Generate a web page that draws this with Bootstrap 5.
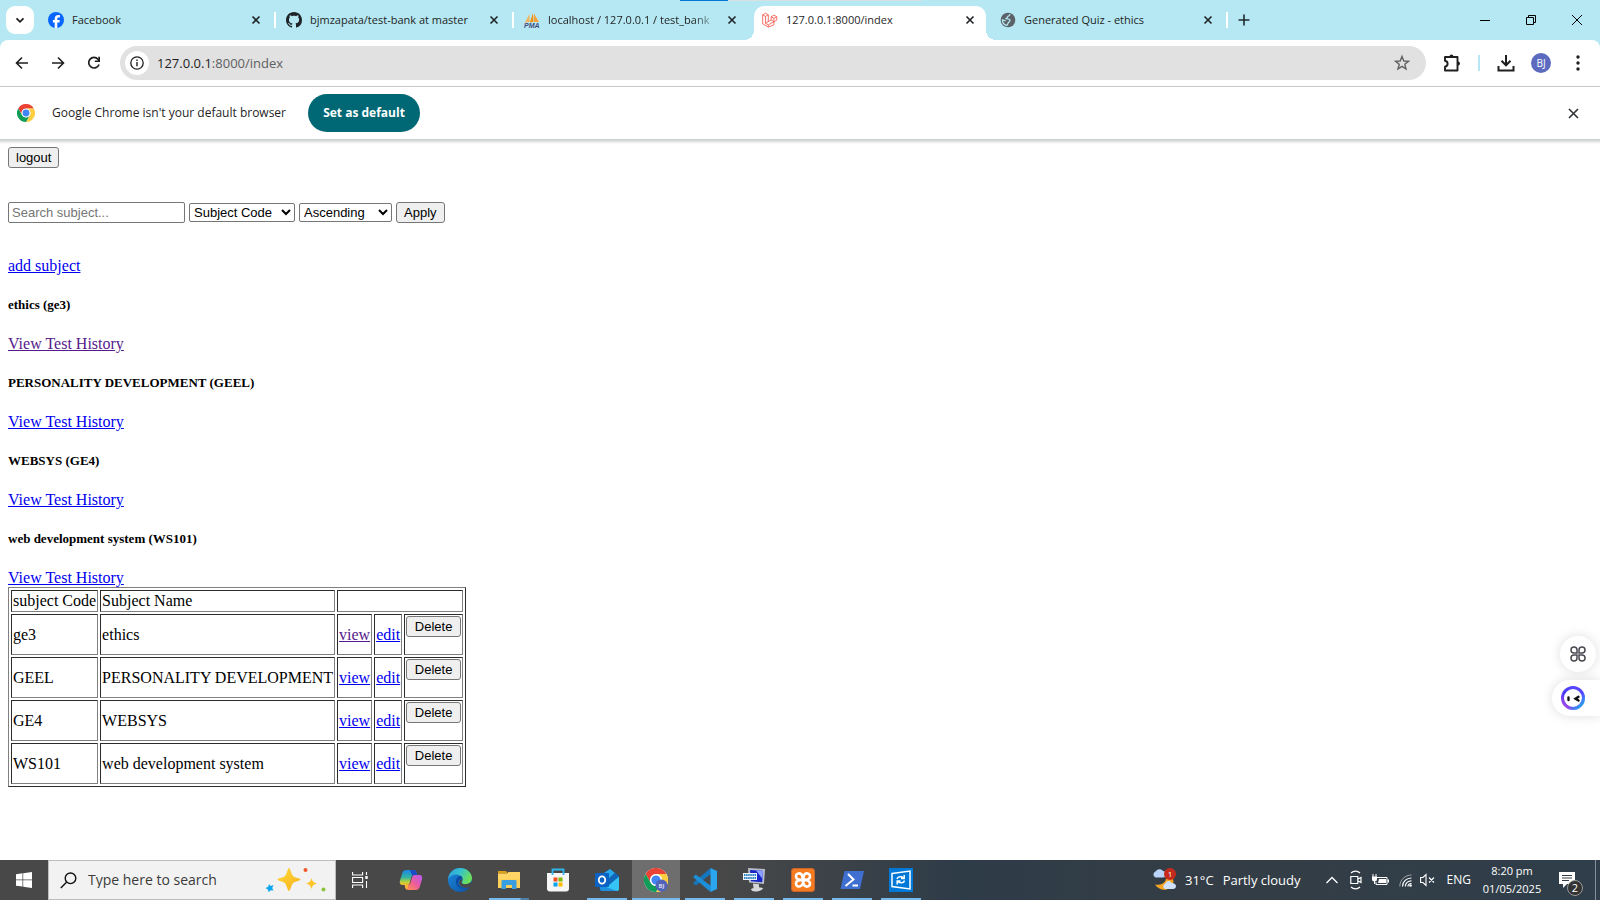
<!DOCTYPE html>
<html lang="en">
<head>
<meta charset="utf-8">
<meta name="viewport" content="width=device-width, initial-scale=1">
<title>127.0.0.1:8000/index</title>
<link href="https://cdn.jsdelivr.net/npm/bootstrap@5.3.0/dist/css/bootstrap.min.css" rel="stylesheet">
<style>
body{font-family:"Open Sans","Noto Sans",sans-serif;font-size:12px;line-height:16px;color:#1f1f1f;background:#fff;overflow:hidden}
button{color:inherit}
svg{display:block;flex:none}
.plain{background:none;border:0;padding:0;display:flex;align-items:center;justify-content:center;flex:none}
.strip{background:#b5e8f2;height:40px}
.tabsearch{width:28px;height:28px;border-radius:9px;background:#fff;margin-left:6px;margin-right:4px}
.tab{flex:0 1 238px;min-width:0;height:24px;padding:0 15px 0 10px;gap:8px;position:relative;font-size:11px}
.tab:not(.on):not(.nosep)::after{content:"";position:absolute;right:0;top:4px;width:2px;height:16px;background:#fff}
.tab .ttl{flex:1;min-width:0;overflow:hidden;white-space:nowrap}
.tab .fade-end{-webkit-mask-image:linear-gradient(90deg,#000 85%,transparent)}
.tab.on{height:34px;align-self:flex-end;padding-bottom:6px;z-index:1}
.tab.on::before{content:"";position:absolute;inset:0 4px 0 2px;background:#fff;border-radius:10px 10px 0 0;z-index:-1}
.flare{position:absolute;bottom:0;width:10px;height:10px}
.flare.l{left:-8px;background:radial-gradient(circle at 0 0,transparent 10px,#fff 10px)}
.flare.r{right:-6px;background:radial-gradient(circle at 100% 0,transparent 10px,#fff 10px)}
.winbtn{width:46px;height:40px}
.loadbar{position:absolute;top:0;left:680px;width:242px;height:1px;background:linear-gradient(90deg,#0078d7 48px,#d6dfe2 48px);z-index:3}
.toolbar-wrap{background:#b5e8f2}
.toolrow{height:47px;background:#fff;border-bottom:1px solid #c7c7c7;border-radius:8px 8px 0 0;padding:0 19px 0 4px}
.toolsep{width:2px;height:16px;background:#b5e8f2;margin:0 17px 0 16px}
.navbtn{width:36px;height:34px}
.omni{height:34px;border-radius:17px;background:#e1e1e1;margin-left:8px;padding:0 15px 0 5px;font-size:13px;min-width:0}
.siteinfo{width:24px;height:24px;border-radius:50%;background:#fff}
.omni span{color:#5f6062}
.avatar{width:20px;height:20px;border-radius:50%;background:#5c6bc0;color:#fff;font-size:10px}
.infobar{height:52px;padding:0 20px 0 17px;font-size:12px}
.notice{margin:0 22px 0 17px}
.setdef{height:38px;width:112px;border:0;border-radius:19px;background:#006874;color:#fff;font-weight:700;font-size:12px}
.pagebox{font:16px/18px "Liberation Serif",serif;color:#000;padding:8px;background:linear-gradient(#ccd2d2 0,#ccd2d2 1px,#dde0e0 2px,#fff 5px)}
.pagebox a{color:#00e}
.pagebox a.seen{color:#551a8b}
.pagebox button,.pagebox input,.pagebox select{font:13px/15px "Liberation Sans",Arial,sans-serif;color:#000;margin:0}
.pagebox button{height:21px;background:#efefef;border:1px solid #767676;border-radius:3px;padding:0 7px}
.pagebox input{width:177px;height:21px;border:1px solid #767676;border-radius:2px;padding:1px 3px}
.pagebox input::placeholder{color:#757575}
.pagebox select{height:19px;background:#fff;border:1px solid #767676;border-radius:2px;padding:0}
.sel-code{width:106px}.sel-dir{width:93px}
.filters{margin:34px 0}
.pagebox h5{font-size:13px;line-height:16px;font-weight:700;margin:22px 0}
.subjects{border-collapse:separate;border-spacing:2px;border:1px outset gray}
.subjects td,.subjects th{border:1px inset gray;padding:1px;font-weight:400;vertical-align:middle;white-space:nowrap}
.subjects form{margin-bottom:16px}
.subjects button{width:55px;display:block}
.sidekick{position:absolute;right:0;top:636px;z-index:5}
.sk-round{width:36px;height:36px;border-radius:50%;background:#fff;box-shadow:0 0 12px #0002;margin-right:4px}
.sk-pill{width:48px;height:36px;border-radius:18px 0 0 18px;background:#fff;box-shadow:0 0 12px #0002;padding-right:6px}
.taskbar{height:40px;background:linear-gradient(90deg,#484848 0,#484848 45%,#2e3c48 60%,#343d45 75%,#2f3e4a 100%);color:#fff}
.startbtn{width:48px;height:40px}
.tsearch{width:288px;height:40px;background:#f2f2f2;border:1px solid #bdbdbd;padding:0 9px 0 11px}
.tsearch input{border:0;background:none;font-size:14px;width:140px;padding:0;margin-left:11px;flex:1;min-width:0}
.tsearch input::placeholder{color:#3b3b3b;opacity:1}
.app{width:48px;height:40px;position:relative;margin-right:1px}
.taskview{margin-right:3px}
.app.run::after{content:"";position:absolute;left:4px;right:4px;bottom:0;height:2px;background:#76b9ed}
.app.multi::after{background:linear-gradient(90deg,#76b9ed 31px,#4f7ea6 32px)}
.app.cur{background:#6e6e6e}
.app.cur::after{left:0;right:0}
.tray{gap:8px}
.weather{font-size:13px;gap:9px;margin-right:17px}
.tight{margin-left:2px}
.clock{font-size:11px;line-height:18px;width:60px;margin:0 1px 0 3px}
.count{position:absolute;left:8px;top:8px;width:16px;height:16px;border-radius:50%;background:#333;border:1px solid #999;font-size:11px;line-height:14px;text-align:center}
.peek{width:1px;height:40px;background:#87919a;margin:0 4px 0 12px}
</style>
</head>
<body class="min-vh-100 d-flex flex-column position-relative">
<svg width="0" height="0" class="position-absolute" aria-hidden="true">
<defs>
<symbol id="x" viewBox="0 0 10 10"><path d="M1.500 1.500l7 7m0-7l-7 7" stroke="#202427" stroke-width="1.600"/></symbol>
<symbol id="globe" viewBox="0 0 16 16"><circle cx="8" cy="8" r="7.300" fill="#5b6166"/><path d="M10 2.200c-.3 1.500-1 2-2.300 2.300-.7 1-.3 1.700-1.500 2.200 1 .4 3.200-.2 3.800 1.300.5 1.500-1.600 2-2 3.300-.2.800-.8 1.700-1.300 2.200C3.500 12.500 2.300 10.500 2.500 7.800L5.800 9" fill="none" stroke="#b5e8f2" stroke-width="1.300"/></symbol>
<symbol id="chrome" viewBox="0 0 24 24"><circle cx="12" cy="12" r="12" fill="#fff"/><path d="M1.600 6A12 12 0 0 1 22.400 6H12a6 6 0 0 0-5.200 9z" fill="#ea4335"/><path d="M22.400 6A12 12 0 0 1 12 24l5.200-9A6 6 0 0 0 12 6z" fill="#ffcd40"/><path d="M1.600 6L6.800 15a6 6 0 0 0 10.400 0L12 24A12 12 0 0 1 1.600 6z" fill="#0f9d58"/><circle cx="12" cy="12" r="5.800" fill="#fff"/><circle cx="12" cy="12" r="4.600" fill="#4285f4"/></symbol>
</defs>
</svg>
<div class="loadbar"></div>
<header>
<div class="strip d-flex align-items-center">
<button class="plain tabsearch" aria-label="Search tabs"><svg width="12" height="12" viewBox="0 0 12 12"><path d="M2.500 4.300L6 7.800l3.500-3.500" fill="none" stroke="#1f1f1f" stroke-width="1.800"/></svg></button>
<div class="tab d-flex align-items-center">
<svg width="16" height="16" viewBox="0 0 16 16"><circle cx="8" cy="8" r="8" fill="#0866ff"/><path d="M6.700 15.900v-5.300H4.900V8.100h1.800V7c0-2.700 1.200-4 3.700-4l1.500.1v2.300h-1c-1.200 0-1.600.4-1.600 1.500v1.200h2.500l-.4 2.500H9.300v5.300z" fill="#fff"/></svg>
<span class="ttl">Facebook</span><button class="plain" aria-label="Close tab"><svg width="10" height="10"><use href="#x"/></svg></button></div>
<div class="tab d-flex align-items-center">
<svg width="16" height="16" viewBox="0 0 16 16"><path fill="#1f2328" d="M8 0C3.580 0 0 3.580 0 8c0 3.540 2.290 6.530 5.470 7.590.4.070.55-.17.55-.38 0-.19-.01-.82-.01-1.490-2.010.37-2.530-.49-2.690-.94-.09-.23-.48-.94-.82-1.130-.28-.15-.68-.52-.01-.53.63-.01 1.080.58 1.230.82.72 1.210 1.870.87 2.330.66.070-.52.28-.87.51-1.070-1.780-.2-3.640-.89-3.640-3.950 0-.87.31-1.590.82-2.150-.08-.2-.36-1.020.08-2.120 0 0 .67-.21 2.200.82.64-.18 1.320-.27 2-.27s1.360.09 2 .27c1.530-1.040 2.200-.82 2.200-.82.44 1.100.16 1.920.08 2.120.51.56.82 1.270.82 2.150 0 3.070-1.870 3.750-3.650 3.950.29.25.54.73.54 1.480 0 1.070-.01 1.930-.01 2.200 0 .21.15.46.55.38A8 8 0 0 0 16 8c0-4.420-3.580-8-8-8z"/></svg>
<span class="ttl">bjmzapata/test-bank at master</span><button class="plain" aria-label="Close tab"><svg width="10" height="10"><use href="#x"/></svg></button></div>
<div class="tab nosep d-flex align-items-center">
<svg width="16" height="16" viewBox="0 0 16 16"><path d="M1 10.500L5.500 2v8z" fill="#f2b45a"/><path d="M5.800 10.500L9 1v9z" fill="#f29111"/><path d="M9.500 10L9.800 1.500 15 10z" fill="#f5a13a"/><text x="0" y="15.500" font-family="Liberation Sans" font-size="7" font-weight="700" font-style="italic" fill="#444a80">PMA</text></svg>
<span class="ttl fade-end">localhost / 127.0.0.1 / test_bank</span><button class="plain" aria-label="Close tab"><svg width="10" height="10"><use href="#x"/></svg></button></div>
<div class="tab on d-flex align-items-center"><i class="flare l"></i><i class="flare r"></i>
<svg width="16" height="16" viewBox="0 0 17 16"><path d="M.7 2.500L3.700.8l3 1.700v7.200l3-1.700V4.500l3-1.700 3 1.700v3.600l-3 1.700v3.300L6.700 15.500l-6-3.400zM.7 2.500l3 1.700 3-1.700M3.700 4.200v7.200l3 1.800 6-3.400-3-1.800M3.700 11.400l3-1.700M6.700 13.200v2.300M9.700 4.500l3 1.700 3-1.700M12.700 6.200v3.600" fill="none" stroke="#f9594f" stroke-width=".9"/></svg>
<span class="ttl">127.0.0.1:8000/index</span><button class="plain" aria-label="Close tab"><svg width="10" height="10"><use href="#x"/></svg></button></div>
<div class="tab d-flex align-items-center"><svg width="16" height="16"><use href="#globe"/></svg>
<span class="ttl">Generated Quiz - ethics</span><button class="plain" aria-label="Close tab"><svg width="10" height="10"><use href="#x"/></svg></button></div>
<button class="plain ms-2" aria-label="New tab"><svg width="16" height="16" viewBox="0 0 16 16"><path d="M8 2.500v11M2.500 8h11" stroke="#1f2a2d" stroke-width="1.600"/></svg></button>
<div class="d-flex ms-auto">
<button class="plain winbtn" aria-label="Minimize"><svg width="10" height="10"><path d="M0 5.500h10" stroke="#000"/></svg></button>
<button class="plain winbtn" aria-label="Restore"><svg width="12" height="12"><path d="M1.500 3.500h7v7h-7zM3.500 3V1.500h7v7H9" fill="none" stroke="#000"/></svg></button>
<button class="plain winbtn" aria-label="Close"><svg width="12" height="12"><path d="M1 1l10 10M11 1L1 11" stroke="#000"/></svg></button>
</div>
</div>
<div class="toolbar-wrap"><div class="toolrow d-flex align-items-center">
<button class="plain navbtn" aria-label="Back"><svg width="14" height="14" viewBox="0 0 14 14"><path d="M13 7H2M7 1.500L1.500 7 7 12.500" fill="none" stroke="#1f1f1f" stroke-width="1.600"/></svg></button>
<button class="plain navbtn" aria-label="Forward"><svg width="14" height="14" viewBox="0 0 14 14"><path d="M1 7h11M7 1.500L12.500 7 7 12.500" fill="none" stroke="#1f1f1f" stroke-width="1.600"/></svg></button>
<button class="plain navbtn" aria-label="Reload"><svg width="14" height="14" viewBox="0 0 14 14"><path d="M12 8.500A5.300 5.300 0 1 1 11 3.200l1.200 1.500" fill="none" stroke="#1f1f1f" stroke-width="1.700"/><path d="M13 .8v5.200H7.800V4.500h3.500V.8z" fill="#1f1f1f"/></svg></button>
<div class="omni d-flex align-items-center flex-grow-1">
<button class="plain siteinfo me-2" aria-label="Site information"><svg width="14" height="14" viewBox="0 0 14 14"><circle cx="7" cy="7" r="6.200" fill="none" stroke="#1f1f1f" stroke-width="1.300"/><path d="M7 6v4.200M7 3.600v1.500" stroke="#1f1f1f" stroke-width="1.400"/></svg></button>
<div>127.0.0.1<span>:8000/index</span></div>
<button class="plain ms-auto" aria-label="Bookmark"><svg width="18" height="18" viewBox="0 0 18 18"><path d="M9 2.500l1.800 4.500 4.700.3-3.700 3 1.200 4.700L9 12.400 5 15l1.200-4.700-3.700-3 4.700-.3z" fill="none" stroke="#5f6062" stroke-width="1.400"/></svg></button>
</div>
<button class="plain ms-3" aria-label="Extensions"><svg width="20" height="20" viewBox="0 0 20 20"><path d="M3 4h12.500v13.500H3v-3.800c3.500-.6 3.500-5.300 0-5.900z" fill="none" stroke="#1f1f1f" stroke-width="1.900" stroke-linejoin="round"/><path d="M7.500 3.500a2 2 0 0 1 4 0zM16 8.500a2 2 0 0 1 0 4z" fill="#1f1f1f"/></svg></button>
<div class="toolsep"></div>
<button class="plain" aria-label="Downloads"><svg width="18" height="18" viewBox="0 0 18 18"><path d="M9 1v10M4.500 6.800L9 11.300l4.500-4.500M1.500 12v4.500h15V12" fill="none" stroke="#1f1f1f" stroke-width="2"/></svg></button>
<button class="plain avatar ms-3" aria-label="Profile BJ">BJ</button>
<button class="plain ms-4" aria-label="Menu"><svg width="6" height="18" viewBox="0 0 6 18" fill="#1f1f1f"><circle cx="3" cy="3" r="1.700"/><circle cx="3" cy="9" r="1.700"/><circle cx="3" cy="15" r="1.700"/></svg></button>
</div></div>
<div class="infobar d-flex align-items-center">
<svg width="18" height="18"><use href="#chrome"/></svg>
<span class="notice">Google Chrome isn't your default browser</span>
<button class="setdef">Set as default</button>
<button class="plain ms-auto" aria-label="Dismiss"><svg width="13" height="13" viewBox="0 0 13 13"><path d="M2 2l9 9m0-9l-9 9" stroke="#303336" stroke-width="1.600"/></svg></button>
</div>
</header>
<main class="pagebox flex-grow-1">
<button class="d-block">logout</button>
<form class="filters d-flex align-items-center gap-1" onsubmit="return false">
<input type="text" placeholder="Search subject..." aria-label="Search subject">
<select class="sel-code" aria-label="Sort by"><option>Subject Code</option><option>Subject Name</option></select>
<select class="sel-dir" aria-label="Order"><option>Ascending</option><option>Descending</option></select>
<button>Apply</button>
</form>
<div><a href="#">add subject</a></div>
<h5>ethics (ge3)</h5>
<div><a class="seen" href="#">View Test History</a></div>
<h5>PERSONALITY DEVELOPMENT (GEEL)</h5>
<div><a href="#">View Test History</a></div>
<h5>WEBSYS (GE4)</h5>
<div><a href="#">View Test History</a></div>
<h5>web development system (WS101)</h5>
<div><a href="#">View Test History</a></div>
<table class="subjects">
<tr><th>subject Code</th><th>Subject Name</th><th colspan="3"></th></tr>
<tr><td>ge3</td><td>ethics</td><td><a class="seen" href="#">view</a></td><td><a href="#">edit</a></td><td><form onsubmit="return false"><button>Delete</button></form></td></tr>
<tr><td>GEEL</td><td>PERSONALITY DEVELOPMENT</td><td><a href="#">view</a></td><td><a href="#">edit</a></td><td><form onsubmit="return false"><button>Delete</button></form></td></tr>
<tr><td>GE4</td><td>WEBSYS</td><td><a href="#">view</a></td><td><a href="#">edit</a></td><td><form onsubmit="return false"><button>Delete</button></form></td></tr>
<tr><td>WS101</td><td>web development system</td><td><a href="#">view</a></td><td><a href="#">edit</a></td><td><form onsubmit="return false"><button>Delete</button></form></td></tr>
</table>
</main>
<aside class="sidekick d-flex flex-column align-items-end gap-2">
<button class="plain sk-round" aria-label="Apps"><svg width="16" height="16" viewBox="0 0 16 16" fill="none" stroke="#4a4850" stroke-width="1.500"><path d="M7 7H4a3 3 0 1 1 3-3zM9 7V4a3 3 0 1 1 3 3zM7 9v3a3 3 0 1 1-3-3zM9 9h3a3 3 0 1 1-3 3z"/></svg></button>
<button class="plain sk-pill" aria-label="Assistant"><svg width="24" height="24" viewBox="0 0 24 24"><defs><linearGradient id="ring" x1="0" y1="1" x2="1" y2="0"><stop offset="0" stop-color="#c04be8"/><stop offset=".4" stop-color="#4b3df5"/><stop offset="1" stop-color="#5a49ff"/></linearGradient><linearGradient id="ring2" x1="0" y1="0" x2="1" y2="1"><stop offset=".6" stop-color="#20c8f0" stop-opacity="0"/><stop offset="1" stop-color="#20c8f0"/></linearGradient></defs><circle cx="12" cy="12" r="10.500" fill="none" stroke="url(#ring)" stroke-width="3"/><circle cx="12" cy="12" r="10.500" fill="none" stroke="url(#ring2)" stroke-width="3"/><path d="M7.500 11.500v2.500M17.500 10.800l-3 1.900 3 1.900" fill="none" stroke="#111" stroke-width="2.400" stroke-linecap="round"/></svg></button>
</aside>
<footer class="taskbar d-flex align-items-center">
<button class="plain startbtn" aria-label="Start"><svg width="16" height="16" viewBox="0 0 16 16" fill="#fff"><path d="M0 2.200l6.500-.9v6.300H0zM7.200 1.200L16 0v7.600H7.200zM0 8.300h6.500v6.300L0 13.700zM7.200 8.300H16V16l-8.800-1.200z"/></svg></button>
<div class="tsearch d-flex align-items-center">
<svg width="17" height="17" viewBox="0 0 17 17"><circle cx="10.500" cy="6.300" r="5.300" fill="none" stroke="#111" stroke-width="1.400"/><path d="M6.500 10.200L.8 16" stroke="#111" stroke-width="1.400"/></svg>
<input type="text" placeholder="Type here to search" aria-label="Type here to search">
<svg width="61" height="26" viewBox="0 0 61 26"><defs><linearGradient id="gold" x1="0" y1="0" x2="1" y2="1"><stop offset="0" stop-color="#ffd83a"/><stop offset="1" stop-color="#f6b21c"/></linearGradient></defs><path d="M24 1c1.300 0 2.300 6.500 4.200 8.200 1.600 1.600 7.300 2 7.300 3.300s-5.800 1.900-7.300 3.500C26.200 18 25.300 24 24 24s-2.300-6-4.200-8c-1.600-1.600-7.300-2-7.300-3.500s5.800-1.800 7.300-3.300C21.700 7.500 22.700 1 24 1z" fill="url(#gold)"/><path d="M46.500 11c1.200 3.700 1.700 4.200 5.300 5.500-3.600 1.300-4.100 1.800-5.300 5.500-1.200-3.700-1.700-4.200-5.300-5.500 3.600-1.300 4.100-1.800 5.300-5.500z" fill="#fcc52c"/><path d="M4 17l1.700 2 2.800-1-1.300 3 1.300 2.500-2.800-.3-2 2-.8-2.700L.5 21l2.800-1.200z" fill="#0aa6ef"/><circle cx="40.500" cy="3" r="2" fill="#f0592b"/><circle cx="58.500" cy="22.500" r="2" fill="#8bc540"/></svg>
</div>
<button class="plain app taskview" aria-label="Task view"><svg width="16" height="16" viewBox="0 0 16 16" fill="none" stroke="#fff" stroke-width="1.100"><path d="M.6 0v3h10V0M.6 16v-3h10v3M.6 5.500h10v5H.6zM14.500 0v3M14.500 9v7"/><path d="M13.300 5.500h2.400" stroke-width="3"/></svg></button>
<button class="plain app" aria-label="Copilot"><svg width="24" height="22" viewBox="0 0 24 22"><defs><linearGradient id="c1" x1="0" y1="0" x2="0" y2="1"><stop offset="0" stop-color="#1a86e8"/><stop offset=".5" stop-color="#35b5a0"/><stop offset=".8" stop-color="#b8d13b"/><stop offset="1" stop-color="#f5b92d"/></linearGradient><linearGradient id="c2" x1="1" y1="0" x2="0" y2="1"><stop offset="0" stop-color="#b45af2"/><stop offset=".5" stop-color="#ee5c9c"/><stop offset="1" stop-color="#ff9a3e"/></linearGradient></defs><path d="M7 1h7.500c2 0 2.800 1.500 3.300 3l.5 2h-3c-2 0-2.800 1-3.300 3l-1.200 4.500c-.6 2-1.800 2.500-3.800 2.500H3.500C1 16 .3 14 1 11.500L3.500 3.500C4 2 5.300 1 7 1z" fill="url(#c1)"/><path d="M17 21H9.500c-2 0-2.800-1.500-3.300-3l-.5-2h2.500c2 0 3-1 3.500-3L13 8.500C13.500 6.600 14.500 6 16.500 6h4c2.500 0 3.200 2 2.500 4.500l-2.500 8c-.5 1.500-1.800 2.500-3.500 2.500z" fill="url(#c2)"/><path d="M14.500 1c2 0 2.800 1.500 3.300 3l.5 2h-3c-1 0-1.700.2-2.200.7L11 1z" fill="#1c4bc4"/><path d="M11.200 10.800L9 18c-.3 1.200-.8 2.200-1.600 2.500C6 19.500 5.900 17 5.700 16h2.500c2 0 2.500-2 3-5.200z" fill="#ffb03a"/></svg></button>
<button class="plain app" aria-label="Edge"><svg width="24" height="24" viewBox="0 0 24 24"><defs><linearGradient id="e1" x1="0" y1="0" x2="1" y2=".4"><stop offset="0" stop-color="#2f9fe0"/><stop offset=".5" stop-color="#35c1d0"/><stop offset="1" stop-color="#6be05a"/></linearGradient><linearGradient id="e2" x1="0" y1="0" x2="1" y2="1"><stop offset="0" stop-color="#1b8be0"/><stop offset="1" stop-color="#0e4f9e"/></linearGradient></defs><circle cx="12" cy="12" r="12" fill="url(#e2)"/><path d="M.2 11C.8 4.800 6 0 12 0c7 0 12 5 12 10.200 0 3.800-3 6-6.500 6-2.500 0-4-1-4-1.800 0-.6 1-1.200 1-3 0-2.700-3-4.900-6.500-4.900C4.500 6.500 1.500 8.500.2 11z" fill="url(#e1)"/><path d="M14.500 11c0-1.200-.6-2.400-1.600-3.300C9 8.500 7.500 12 8.200 15c1 4.500 6 7 12.300 5.500C17 22 11 19.800 10.200 15.500c-.4-2.300 1-4.500 4.300-4.500z" fill="#0b4aa0"/><path d="M14.500 11c0 2-1 2.600-1 3.400 0 .8 1.500 1.800 4 1.800 2.300 0 4.500-1 5.600-2.500L24 17l-2.300 2c-1.800.8-3.500 1-5 .8-3.500-.6-5.700-3-5.500-5.300.1-1.700 1.400-3 3.300-3.500z" fill="#484848"/></svg></button>
<button class="plain app run multi" aria-label="File Explorer"><svg width="22" height="20" viewBox="0 0 22 20"><path d="M0 1h8l2 2.500H0z" fill="#dd9f14"/><path d="M0 3.500h9L10.500 2H22v16H0z" fill="#ffd666"/><path d="M0 9h22v9H0z" fill="#fbcf58"/><path d="M3.500 19v-7.500c0-1 .5-1.500 1.500-1.500h12c1 0 1.500.5 1.500 1.500V19H14v-4H8v4z" fill="#3a9fe0"/></svg></button>
<button class="plain app" aria-label="Store"><svg width="24" height="24" viewBox="0 0 24 24"><path d="M1 5h22v15.500c0 2-1 3-3 3H4c-2 0-3-1-3-3z" fill="#f6f6f6"/><path d="M6.500 7V1.500h11V7" fill="none" stroke="#31b5ee" stroke-width="1.800"/><path d="M7.500 9.500h4v4h-4z" fill="#f25022"/><path d="M12.500 9.500h4v4h-4z" fill="#7fba00"/><path d="M7.500 14.500h4v4h-4z" fill="#00a4ef"/><path d="M12.500 14.500h4v4h-4z" fill="#ffb900"/></svg></button>
<button class="plain app run" aria-label="Outlook"><svg width="24" height="24" viewBox="0 0 24 24"><path d="M4 8L15 1l9 7v13c0 1-.7 2-2 2H7c-1.500 0-2.500-1-2.500-2.500z" fill="#0f5cab"/><path d="M9 5l6-4 5 4-9 8z" fill="#28a8ea"/><path d="M13 12l7-7 4 3-9 8z" fill="#1066b8"/><path d="M24 8.500V21c0 1-1 2-2 2H7z" fill="#35c4f3"/><path d="M5 17l17 6H7c-1 0-2-1-2-2z" fill="#1e90e0"/><rect y="5" width="14" height="14" rx="1" fill="#0a63c4"/><ellipse cx="7" cy="12" rx="3.200" ry="3.600" fill="none" stroke="#fff" stroke-width="1.800"/></svg></button>
<button class="plain app run cur" aria-label="Chrome"><svg width="24" height="24" viewBox="0 0 24 24"><use href="#chrome" width="24" height="24"/><circle cx="17.500" cy="17.500" r="6" fill="#5163b8"/><text x="17.500" y="20" font-size="6" font-weight="700" text-anchor="middle" fill="#d5daf2">BJ</text></svg></button>
<button class="plain app run" aria-label="Visual Studio Code"><svg width="24" height="24" viewBox="0 0 24 24"><path d="M17.500 0L18 6 2.800 17.500 0 15z" fill="#1576bd"/><path d="M17.500 24L18 18 2.800 6.500 0 9z" fill="#1d8fd8"/><path d="M17.500 0L24 3v18l-6.500 3z" fill="#2aa5ee"/></svg></button>
<button class="plain app run" aria-label="Remote desktop"><svg width="24" height="24" viewBox="0 0 24 24"><path d="M6 0l17 1-1 15-15-1.500z" fill="#b9bdcb"/><path d="M8 2l13 .8-.8 11.500L9 13.200z" fill="#1726c8"/><path d="M14 2.400l7 .4-.6 8z" fill="#8ca0ff"/><path d="M11 15.500l6 .7v3l4 .8c0 2-5 3.800-8 3.500-2.500 0-4-1.500-4-2.500l2.500-1z" fill="#d4d6da"/><rect x="1" y="5" width="14" height="7" fill="#f1f4f8"/><path d="M2 7h12M2 10h12" stroke="#2d83c7" stroke-width="2" stroke-dasharray="1.500 .6"/></svg></button>
<button class="plain app run" aria-label="XAMPP"><svg width="24" height="24" viewBox="0 0 24 24"><rect x=".5" y=".5" width="23" height="23" rx="2.500" fill="#f47b20" stroke="#c8652a"/><path d="M10.500 6.500C8.500 4.500 5 5.500 5 8.500S8 12 12 12s7-.5 7-3.500-3.500-4-5.500-2c-2 2 0 9-3 11S5 18.500 5 15.500 8 12 12 12s7 .5 7 3.500-3.500 4-5.500 2-1-9-3-11z" fill="none" stroke="#fff" stroke-width="2.600" stroke-linejoin="round"/></svg></button>
<button class="plain app run" aria-label="PowerShell"><svg width="24" height="20" viewBox="0 0 24 20"><path d="M4.500 1H24l-4 18H.5z" fill="#3f6fd0"/><path d="M8 4l5.500 5.500L5.500 16M12.500 15.500H18" fill="none" stroke="#fff" stroke-width="2"/></svg></button>
<button class="plain app run" aria-label="Sync"><svg width="24" height="24" viewBox="0 0 24 24"><path d="M0 0h24v24H0z" fill="#0078d7"/><path d="M3 5.500L21 3v18L3 18.500z" fill="none" stroke="#fff" stroke-width="1.500"/><path d="M8 11c.5-2.500 4.500-3 6.500-1M15.200 7v3.500H12M15.500 12.500c-.5 2.700-4.500 3-6.500 1M8.200 16.500V13h3.300" fill="none" stroke="#fff" stroke-width="1.500"/></svg></button>
<div class="tray d-flex align-items-center ms-auto">
<div class="weather d-flex align-items-center">
<svg width="24" height="24" viewBox="0 0 24 24"><path d="M13 7c3 5-1 11-10 9.500 3 5 10 7 15 3.500 3-2 4-6 3-9z" fill="#f5a524"/><path d="M3.500 9.500a3.200 3.200 0 0 1 0-6C4.500 1 9 0 11 3c2 .2 3 1.700 3 3.200s-1.200 3.300-3 3.300z" fill="#b9d4f8"/><path d="M13 21a2.800 2.800 0 0 1 .3-5.300c1-3.200 5-3.500 6.200-.7 3 0 4.500 1.500 4.500 3 0 2-1.200 3-3 3z" fill="#cfe0fb"/><circle cx="18" cy="6" r="6" fill="#c42b1c"/><text x="18" y="9" font-size="8" text-anchor="middle" fill="#fff">1</text></svg>
<span>31°C</span><span>Partly cloudy</span></div>
<button class="plain" aria-label="Hidden icons"><svg width="12" height="8"><path d="M.5 7L6 1.500 11.500 7" fill="none" stroke="#fff" stroke-width="1.300"/></svg></button>
<svg class="ms-1" width="12" height="20" viewBox="0 0 12 20" fill="none" stroke="#fff" stroke-width="1.200"><path d="M.8 6.500h7v7h-7zM8 9l3-1.500v5L8 11M1 3c2.500-2.500 6.500-2.500 9 0M1 17c2.500 2.500 6.500 2.500 9 0"/></svg>
<svg class="tight" width="17" height="12" viewBox="0 0 17 12"><path d="M5 3.500h10v7H4V8" fill="none" stroke="#fff"/><path d="M7 5h7v4H6zM15.500 5.500H17v3h-1.500zM0 2.500h5V5a2.500 2.500 0 0 1-5 0zM.5 0h1v2.500h-1zM3.500 0h1v2.500h-1zM2 7h1v3H2z" fill="#fff"/></svg>
<svg class="tight" width="13" height="13" viewBox="0 0 13 13" fill="none"><path d="M.8 12.500C.8 6 6 1 12.500 1" stroke="#9ba3aa"/><path d="M3.500 12.500c0-5 4-8.500 9-8.500M6.300 12.500c0-3.500 2.700-5.700 6.200-5.700M9 12.500c0-2 1.500-3 3.500-3" stroke="#fff" stroke-width="1.200"/><circle cx="11.500" cy="11.500" r="1.300" fill="#fff"/></svg>
<svg width="15" height="14" viewBox="0 0 15 14" fill="none" stroke="#fff" stroke-width="1.100"><path d="M.6 4.500H3L6 1.500v11l-3-3H.6zM9 4.500l5 5M14 4.500l-5 5"/></svg>
<span class="ms-1">ENG</span>
<div class="clock text-center"><div>8:20 pm</div><div>01/05/2025</div></div>
<button class="plain position-relative ms-2" aria-label="Notifications"><svg width="16" height="16" viewBox="0 0 16 16"><path d="M0 0h16v12H8l-4 4v-4H0z" fill="#fff"/><path d="M3 3.500h10M3 6h10M3 8.500h7" stroke="#333d46"/></svg><span class="count">2</span></button>
<div class="peek"></div>
</div>
</footer>
<script src="https://cdn.jsdelivr.net/npm/bootstrap@5.3.0/dist/js/bootstrap.bundle.min.js"></script>
</body>
</html>
